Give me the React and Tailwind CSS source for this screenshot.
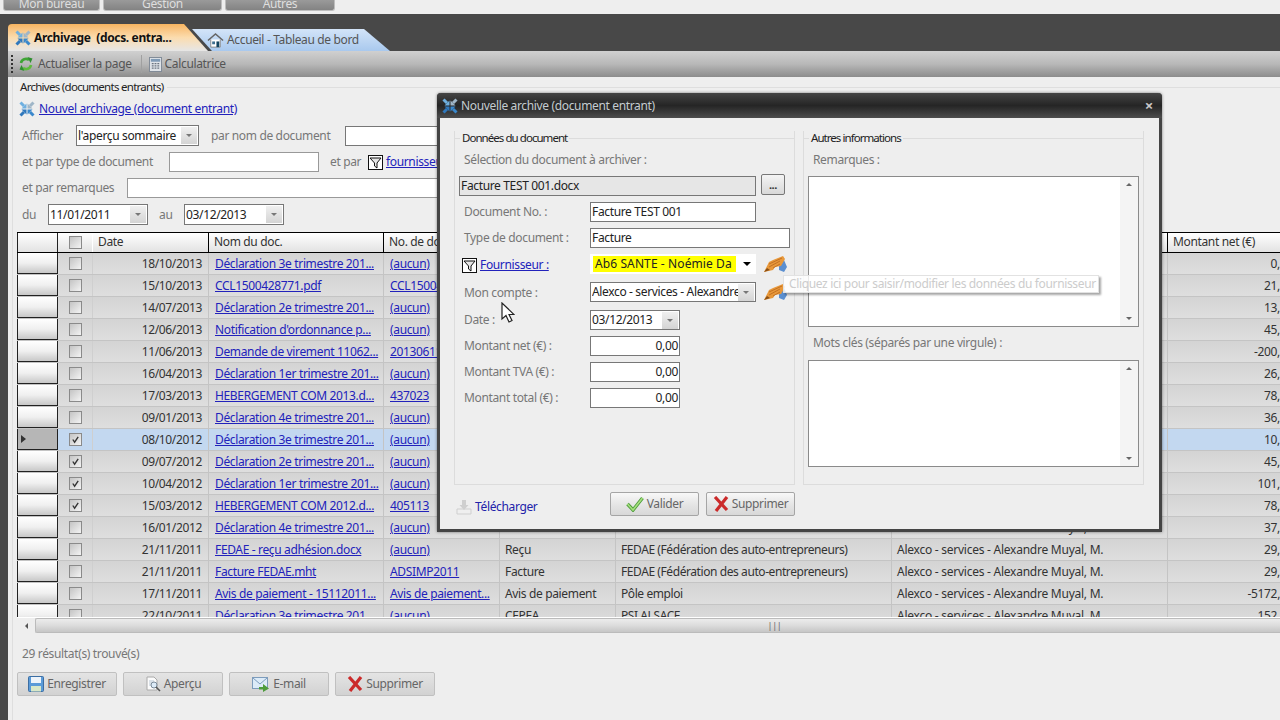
const font = { fontFamily: '"Noto Sans", "Open Sans", sans-serif' }

const rows = [
  { date: '18/10/2013', name: 'Déclaration 3e trimestre 201...', no: '(aucun)', net: '0,' },
  { date: '15/10/2013', name: 'CCL1500428771.pdf', no: 'CCL1500428771', net: '21,' },
  { date: '14/07/2013', name: 'Déclaration 2e trimestre 201...', no: '(aucun)', net: '13,' },
  { date: '12/06/2013', name: "Notification d'ordonnance p...", no: '(aucun)', net: '45,' },
  { date: '11/06/2013', name: 'Demande de virement 11062...', no: '20130611', net: '-200,' },
  { date: '16/04/2013', name: 'Déclaration 1er trimestre 201...', no: '(aucun)', net: '26,' },
  { date: '17/03/2013', name: 'HEBERGEMENT COM 2013.d...', no: '437023', net: '78,' },
  { date: '09/01/2013', name: 'Déclaration 4e trimestre 201...', no: '(aucun)', net: '36,' },
  { date: '08/10/2012', name: 'Déclaration 3e trimestre 201...', no: '(aucun)', net: '10,', checked: true, selected: true },
  { date: '09/07/2012', name: 'Déclaration 2e trimestre 201...', no: '(aucun)', net: '45,', checked: true },
  { date: '10/04/2012', name: 'Déclaration 1er trimestre 201...', no: '(aucun)', net: '101,', checked: true },
  { date: '15/03/2012', name: 'HEBERGEMENT COM 2012.d...', no: '405113', net: '78,', checked: true },
  { date: '16/01/2012', name: 'Déclaration 4e trimestre 201...', no: '(aucun)', net: '37,' },
  { date: '21/11/2011', name: 'FEDAE - reçu adhésion.docx', no: '(aucun)', type: 'Reçu', supplier: 'FEDAE (Fédération des auto-entrepreneurs)', net: '29,' },
  { date: '21/11/2011', name: 'Facture FEDAE.mht', no: 'ADSIMP2011', type: 'Facture', supplier: 'FEDAE (Fédération des auto-entrepreneurs)', net: '29,' },
  { date: '17/11/2011', name: 'Avis de paiement - 15112011...', no: 'Avis de paiement...', type: 'Avis de paiement', supplier: 'Pôle emploi', net: '-5172,' },
  { date: '22/10/2011', name: 'Déclaration 3e trimestre 201', no: '(aucun)', type: 'CEPEA', supplier: 'PSI ALSACE', net: '152,' },
]

const ArchiveIcon = ({ className = 'w-4 h-4' }) => (
  <svg viewBox="0 0 16 16" className={className}>
    <path d="M1.500 1.500L5 5" stroke="#6fb0e0" strokeWidth="3" />
    <path d="M7.500 7.500V2.500L2.500 7.500z" fill="#6fb0e0" />
    <path d="M14.500 1.500L11 5" stroke="#9fb6c8" strokeWidth="3" />
    <path d="M8.500 7.500V2.500L13.500 7.500z" fill="#9fb6c8" />
    <path d="M1.500 14.500L5 11" stroke="#2f78bd" strokeWidth="3" />
    <path d="M7.500 8.500V13.500L2.500 8.500z" fill="#2f78bd" />
    <path d="M14.500 14.500L11 11" stroke="#3a88cc" strokeWidth="3" />
    <path d="M8.500 8.500V13.500L13.500 8.500z" fill="#3a88cc" />
  </svg>
)

const HomeIcon = () => (
  <svg viewBox="0 0 18 18" className="w-[17px] h-[17px]">
    <path d="M4 8v8h10V8" fill="#fff" stroke="#888" />
    <path d="M1 9l8-7 8 7" fill="none" stroke="#666" strokeWidth="1.600" />
    <rect x="10" y="10" width="3" height="6" fill="#15455f" />
    <rect x="5.500" y="10" width="3" height="3" fill="#3f6f8f" />
  </svg>
)

const RefreshIcon = () => (
  <svg viewBox="0 0 16 16" className="w-4 h-4">
    <path d="M3 7a5 5 0 0 1 8-3" fill="none" stroke="#3fa535" strokeWidth="2.600" />
    <path d="M13 9a5 5 0 0 1-8 3" fill="none" stroke="#5dbb3d" strokeWidth="2.600" />
    <path d="M9.500 1l5 1.500-2 4.500zM6.500 15l-5-1.500 2-4.500z" fill="#2f8f30" />
  </svg>
)

const CalcIcon = () => (
  <svg viewBox="0 0 14 16" className="w-[13px] h-[15px]">
    <rect x="0.500" y="0.500" width="13" height="15" fill="#dfe3e8" stroke="#7d8794" />
    <rect x="2" y="2" width="10" height="3" fill="#7f9ab5" />
    <path d="M3 7h2M6 7h2M9 7h2M3 9.500h2M6 9.500h2M9 9.500h2M3 12h2M6 12h2M9 12h2" stroke="#6b7480" strokeWidth="1.400" />
  </svg>
)

const FilterBox = () => (
  <svg viewBox="0 0 15 15" className="w-[15px] h-[15px] shrink-0">
    <rect x="0.500" y="0.500" width="14" height="14" fill="#fff" stroke="#111" />
    <path d="M2 3h11L9 8v5L6.500 11V8z" fill="#e6e6e6" stroke="#111" />
  </svg>
)

const PencilIcon = () => (
  <svg viewBox="0 0 24 18" className="w-6 h-[18px]">
    <path d="M16 10l5-5 3 7-3 5-5-2z" fill="#5b8fd0" />
    <path d="M1 17l5-10 4-2L20 1l2 3-4 7-6 1-2 3z" fill="#e8983a" />
    <path d="M6 9l13-6M6 12l11-6M10 13l7-4" stroke="#bd6c20" strokeWidth="0.900" />
    <path d="M1 17l3-4 3 2z" fill="#8a4f16" />
  </svg>
)

const CheckIcon = () => (
  <svg viewBox="0 0 18 16" className="w-[18px] h-4">
    <path d="M1.500 8l5.500 6L16.500 2" fill="none" stroke="#4e9c3c" strokeWidth="3.400" />
    <path d="M1.500 8l5.500 6L16.500 2" fill="none" stroke="#a6e07e" strokeWidth="1.600" />
  </svg>
)

const CrossIcon = () => (
  <svg viewBox="0 0 16 16" className="w-4 h-4">
    <path d="M2 1l12 13M14 1L3 15" fill="none" stroke="#cb2a2a" strokeWidth="3.200" />
  </svg>
)

const SaveIcon = () => (
  <svg viewBox="0 0 16 16" className="w-4 h-4">
    <rect x="0.500" y="0.500" width="15" height="15" rx="1" fill="#5b9bd8" stroke="#3c6ea3" />
    <rect x="3" y="1" width="10" height="6" fill="#eef4fa" />
    <rect x="3" y="10" width="10" height="5.500" fill="#d9e8c8" />
  </svg>
)

const PreviewIcon = () => (
  <svg viewBox="0 0 16 16" className="w-4 h-4">
    <path d="M2 1h7l3 3v10H2z" fill="#fbfbfb" stroke="#aaa" />
    <path d="M4 5h5M4 7h3M4 9h3" stroke="#b8c6d4" />
    <circle cx="9" cy="9" r="3" fill="#dcebf8" stroke="#7a8a99" />
    <path d="M11 11l4 4" stroke="#555" strokeWidth="1.600" />
  </svg>
)

const MailIcon = () => (
  <svg viewBox="0 0 18 16" className="w-[18px] h-4">
    <rect x="0.500" y="1.500" width="15" height="11" fill="#dcebf8" stroke="#7d9cbc" />
    <path d="M1 2l7 6 7-6" fill="none" stroke="#7d9cbc" />
    <path d="M7 11h4V8l6 4.500-6 3.500v-2.500H7z" fill="#4e9c3c" />
  </svg>
)

const DownloadIcon = () => (
  <svg viewBox="0 0 16 16" className="w-4 h-4">
    <path d="M1 10h14v5H1z" fill="#efefef" stroke="#cfcfcf" />
    <path d="M6 1h4v5h2.500L8 11 3.500 6H6z" fill="#cfcfcf" />
  </svg>
)

const Cursor = () => (
  <svg viewBox="0 0 14 21" className="absolute left-[501px] top-[302px] w-[14px] h-[21px]">
    <path d="M1 1v16l4-3.500 3 6.500 3-1.500-3-6h5z" fill="#fff" stroke="#222" strokeWidth="1.200" />
  </svg>
)

const Arrow = ({ className = 'border-t-[#777]' }) => (
  <span className={`w-0 h-0 border-x-[3px] border-x-transparent border-t-[3px] ${className}`} />
)

const Combo = ({ text, className }) => (
  <div className={`flex items-center bg-white border border-[#777] pl-[1px] pr-[1px] shrink-0 ${className}`}>
    <span className="flex-1 text-[12px] text-[#222] overflow-hidden whitespace-nowrap">{text}</span>
    <span className="w-[16px] h-[17px] bg-gradient-to-b from-[#f0f0f0] to-[#d4d4d4] flex items-center justify-center shrink-0">
      <Arrow />
    </span>
  </div>
)

const Check = ({ checked }) => (
  <span className="w-[13px] h-[13px] border border-[#8a8a8a] bg-gradient-to-br from-[#c4c4c4] to-[#f4f4f4] flex items-center justify-center">
    {checked && (
      <svg viewBox="0 0 10 10" className="w-[9px] h-[9px]">
        <path d="M2 5l2 3 4-6" fill="none" stroke="#333" strokeWidth="1.500" />
      </svg>
    )}
  </span>
)

const BottomBtn = ({ icon, label, className = '' }) => (
  <button className={`w-[100px] h-[24px] flex items-center justify-center gap-[3px] bg-gradient-to-b from-[#e4e4e4] to-[#d2d2d2] border border-[#c0c0c0] rounded-[2px] text-[12px] text-[#666] ${className}`}>
    {icon}
    {label}
  </button>
)

const DialogBtn = ({ icon, label }) => (
  <button className="w-[89px] h-[24px] flex items-center justify-center gap-[3px] bg-gradient-to-b from-[#f8f8f8] via-[#e6e6e6] to-[#d8d8d8] border border-[#a5a5a5] rounded-[2px] text-[12px] text-[#666]">
    {icon}
    {label}
  </button>
)

const GroupTitle = ({ text }) => (
  <div className="flex items-center h-[14px] gap-[2px]">
    <span className="w-[5px] h-px bg-[#dcdcdc]" />
    <span className="text-[11.5px] tracking-[-0.95px] text-[#222] whitespace-nowrap">{text}</span>
    <span className="flex-1 h-px bg-[#dcdcdc]" />
  </div>
)

const Field = ({ label, children, className = 'mt-[6px] h-5' }) => (
  <div className={`flex items-center pl-[9px] ${className}`}>
    <span className="w-[126px] text-[12px] text-[#777] whitespace-nowrap">{label}</span>
    {children}
  </div>
)

const Input = ({ value, className, right }) => (
  <div className={`h-5 bg-white border border-[#777] px-[1px] flex items-center text-[12px] text-[#222] whitespace-nowrap overflow-hidden ${right ? 'justify-end' : ''} ${className}`}>
    {value}
  </div>
)

const TextArea = ({ className }) => (
  <div className={`ml-[4px] w-[331px] bg-white border border-[#8a8a8a] flex justify-end ${className}`}>
    <div className="w-[18px] bg-[#f4f4f4] flex flex-col items-center justify-between py-[6px]">
      <span className="w-0 h-0 border-x-[3px] border-x-transparent border-b-[3px] border-b-[#666]" />
      <Arrow className="border-t-[#666]" />
    </div>
  </div>
)

const Dialog = () => (
  <div className="absolute left-[437px] top-[93px] w-[725px] h-[439px] border-[3px] border-t-0 border-[#444] rounded-t-[4px] bg-[#eeeeee] flex flex-col shadow-[0_0_3px_rgba(0,0,0,0.5)]">
    <div className="h-[25px] -mx-[3px] shrink-0 rounded-t-[4px] bg-gradient-to-b from-[#454545] via-[#252525] to-[#4d4d4d] flex items-center pl-[5px] pr-[9px] gap-[3px]">
      <ArchiveIcon />
      <span className="text-[12px] text-[#c4ccd0] flex-1">Nouvelle archive (document entrant)</span>
      <span className="text-[15px] leading-none font-bold text-[#c8c8c8]">×</span>
    </div>
    <div className="flex pt-[13px] pl-[14px] gap-[8px] h-[367px] shrink-0">
      <div className="w-[341px] border-x border-b border-[#dcdcdc]">
        <GroupTitle text="Données du document" />
        <div className="mt-[7px] h-4 flex items-center pl-[9px] text-[12px] text-[#777]">Sélection du document à archiver :</div>
        <div className="mt-[6px] h-[22px] flex items-center pl-[4px] gap-[5px]">
          <div className="w-[297px] h-5 mt-[2px] bg-[#e6e6e6] border border-[#777] px-[1px] flex items-center text-[12px] text-[#222]">Facture TEST 001.docx</div>
          <button className="w-[24px] h-[21px] mb-[1px] border border-[#777] rounded-[2px] bg-gradient-to-b from-[#f4f4f4] to-[#d8d8d8] text-[11px] leading-none font-bold text-[#333]">...</button>
        </div>
        <Field label="Document No. :"><Input value="Facture TEST 001" className="w-[166px]" /></Field>
        <Field label="Type de document :"><Input value="Facture" className="w-[200px]" /></Field>
        <Field
          className="mt-[6px] h-5"
          label={
            <span className="flex items-center gap-[3px] -ml-[2px] mt-[2px]">
              <FilterBox />
              <span className="text-[#2222bb] underline">Fournisseur :</span>
            </span>
          }
        >
          <div className="w-[166px] h-5 bg-white flex items-center pl-[3px] pr-[5px]">
            <span className="w-[143px] h-4 bg-[#ffff00] pl-[2px] text-[12px] leading-4 text-[#222] tracking-[0.1px] whitespace-nowrap overflow-hidden">Ab6 SANTE - Noémie Da</span>
            <span className="ml-auto w-0 h-0 border-x-[4px] border-x-transparent border-t-[4px] border-t-black" />
          </div>
          <span className="ml-[7px]"><PencilIcon /></span>
        </Field>
        <Field className="mt-[8px] h-5" label={<span className="block mt-[2px]">Mon compte :</span>}>
          <Combo text="Alexco - services - Alexandre Muyal, M." className="w-[166px] h-5" />
          <span className="ml-[7px]"><PencilIcon /></span>
        </Field>
        <Field className="mt-[8px] h-5" label="Date :"><Combo text="03/12/2013" className="w-[90px] h-5" /></Field>
        <Field label="Montant net (€) :"><Input value="0,00" right className="w-[90px]" /></Field>
        <Field label="Montant TVA (€) :"><Input value="0,00" right className="w-[90px]" /></Field>
        <Field label="Montant total (€) :"><Input value="0,00" right className="w-[90px]" /></Field>
      </div>
      <div className="w-[341px] border-x border-b border-[#dcdcdc]">
        <GroupTitle text="Autres informations" />
        <div className="mt-[7px] h-4 flex items-center pl-[9px] text-[12px] text-[#777]">Remarques :</div>
        <TextArea className="mt-[8px] h-[151px]" />
        <div className="mt-[8px] h-4 flex items-center pl-[9px] text-[12px] text-[#777]">Mots clés (séparés par une virgule) :</div>
        <TextArea className="mt-[9px] h-[107px]" />
      </div>
    </div>
    <div className="mt-[7px] ml-[14px] w-[341px] h-[24px] flex items-center gap-[7px]">
      <div className="flex items-center gap-[3px] mt-[6px] ml-[2px] mr-auto">
        <DownloadIcon />
        <span className="text-[12px] text-[#2222aa]">Télécharger</span>
      </div>
      <DialogBtn icon={<CheckIcon />} label="Valider" />
      <DialogBtn icon={<CrossIcon />} label="Supprimer" />
    </div>
  </div>
)

const Table = () => (
  <div className="mt-[7px] h-[385px] overflow-hidden text-[12px]">
    <div className="flex h-[21px] bg-gradient-to-b from-white to-[#e2e2e2] border-y border-black text-[#333]">
      <div className="w-[41px] border-l border-r border-[#222] shrink-0" />
      <div className="w-[35px] border-r border-white shrink-0 flex items-center justify-center"><Check /></div>
      <div className="w-[116px] border-r border-black shrink-0 px-[5px] leading-[18px]">Date</div>
      <div className="w-[175px] border-r border-black shrink-0 px-[5px] leading-[18px]">Nom du doc.</div>
      <div className="w-[116px] shrink-0 px-[5px] leading-[18px]">No. de doc.</div>
      <div className="w-[668px] border-r border-black shrink-0" />
      <div className="flex-1 px-[5px] leading-[18px] whitespace-nowrap">Montant net (€)</div>
    </div>
    {rows.map((r, i) => (
      <div key={i} className="flex h-[22px] border-b border-[#c4c4c4] text-[#333] whitespace-nowrap">
        <div className={`w-[41px] shrink-0 border-x border-b border-x-[#222] border-b-[#222] flex items-center pl-[3px] ${r.selected ? 'bg-[#b6b6b6]' : 'bg-gradient-to-b from-white via-[#f0f0f0] to-[#c8c8c8]'}`}>
          {r.selected && <span className="w-0 h-0 border-y-[4px] border-y-transparent border-l-[5px] border-l-[#333]" />}
        </div>
        <div className={`flex flex-1 min-w-0 ${r.selected ? 'bg-[#c3d8f0]' : 'bg-gradient-to-b from-[#d4d4d4] to-[#dedede]'}`}>
          <div className="w-[35px] shrink-0 flex items-center justify-center border-r border-[#cfcfcf]"><Check checked={r.checked} /></div>
          <div className="w-[116px] shrink-0 border-r border-[#c4c4c4] pr-[6px] text-right leading-[22px]">{r.date}</div>
          <div className="w-[175px] shrink-0 border-r border-[#c4c4c4] pl-[6px] leading-[22px] text-[#2222bb] underline overflow-hidden">{r.name}</div>
          <div className="w-[116px] shrink-0 border-r border-[#c4c4c4] pl-[6px] leading-[22px] text-[#2222bb] underline overflow-hidden">{r.no}</div>
          <div className="w-[116px] shrink-0 border-r border-[#c4c4c4] pl-[5px] leading-[22px]">{r.type}</div>
          <div className="w-[276px] shrink-0 border-r border-[#c4c4c4] pl-[5px] leading-[22px] tracking-[-0.42px]">{r.supplier}</div>
          <div className="w-[276px] shrink-0 border-r border-[#c4c4c4] pl-[5px] leading-[22px] tracking-[-0.25px]">Alexco - services - Alexandre Muyal, M.</div>
          <div className="flex-1 text-right leading-[22px]">{r.net}</div>
        </div>
      </div>
    ))}
  </div>
)

export default function App() {
  return (
    <div className="relative w-[1280px] h-[720px] overflow-hidden bg-[#484848] flex flex-col tracking-[-0.35px]" style={font}>
      {/* menu */}
      <div className="h-[14px] shrink-0 bg-[#eeeeee] flex gap-[3px] pl-[3px] overflow-hidden">
        {[['Mon bureau', 'w-[97px]'], ['Gestion', 'w-[119px]'], ['Autres', 'w-[110px]']].map(([t, w]) => (
          <div key={t} className={`${w} h-[11px] rounded-b-[3px] border-x border-b border-[#bdbdbd] bg-gradient-to-b from-[#9a9a9a] to-[#838383] text-center text-[12px] leading-[7px] text-[#dedede]`}>{t}</div>
        ))}
      </div>

      {/* tabs */}
      <div className="mt-[10px] ml-[8px] h-[27px] shrink-0 flex items-end">
        <div className="relative z-10 w-[200px] h-[27px] pl-[7px] flex items-center gap-[3px] rounded-tl-[4px] bg-gradient-to-b from-[#f7b45f] via-[#fbdcae] to-[#e6e6e6] [clip-path:polygon(0_0,176px_0,100%_100%,0_100%)]">
          <ArchiveIcon />
          <span className="text-[12px] font-bold text-[#111] whitespace-pre">Archivage  (docs. entra...</span>
        </div>
        <div className="w-[198px] h-[22px] -ml-[16px] pl-[15px] flex items-center gap-[3px] bg-gradient-to-b from-[#d3e4f8] to-[#a9c9ee] [clip-path:polygon(0_0,172px_0,100%_100%,20px_100%)]">
          <HomeIcon />
          <span className="text-[12px] text-[#555] whitespace-nowrap">Accueil - Tableau de bord</span>
        </div>
      </div>

      {/* toolbar */}
      <div className="ml-[8px] h-[26px] shrink-0 bg-gradient-to-b from-[#d0d0d0] via-[#b8b8b8] to-[#8c8c8c] flex items-center pl-[3px] text-[12px] text-[#555]">
        <span className="w-[2px] h-[18px] mr-[5px] border-l-2 border-dotted border-[#333]" />
        <RefreshIcon />
        <span className="ml-[4px]">Actualiser la page</span>
        <span className="w-px h-[18px] bg-[#a0a0a0] ml-[9px] mr-[7px]" />
        <CalcIcon />
        <span className="ml-[3px]">Calculatrice</span>
      </div>

      {/* panel */}
      <div className="ml-[8px] flex-1 bg-[#eeeeee] pl-[4px]">
        <div className="h-full border-l border-[#dedede] pl-[4px] text-[12px] text-[#777]">
          <div className="h-5 flex items-center ml-[3px] gap-[4px]">
            <span className="text-[11.5px] text-[#222] tracking-[-0.72px] whitespace-nowrap">Archives (documents entrants)</span>
            <span className="flex-1 h-px bg-[#dedede]" />
          </div>
          <div className="mt-[2px] h-5 flex items-center gap-[4px] ml-[2px]">
            <ArchiveIcon />
            <span className="text-[#2222bb] underline">Nouvel archivage (document entrant)</span>
          </div>
          <div className="mt-[6px] h-[21px] flex items-center pl-[5px]">
            <span className="w-[54px]">Afficher</span>
            <Combo text="l'aperçu sommaire" className="w-[123px] h-[21px]" />
            <span className="ml-[12px] w-[134px]">par nom de document</span>
            <div className="w-[200px] h-5 bg-white border border-[#777]" />
          </div>
          <div className="mt-[6px] h-5 flex items-center pl-[5px]">
            <span className="w-[147px]">et par type de document</span>
            <div className="w-[150px] h-5 bg-white border border-[#999]" />
            <span className="ml-[11px] w-[38px]">et par</span>
            <FilterBox />
            <span className="ml-[3px] text-[#2222bb] underline">fournisseur</span>
          </div>
          <div className="mt-[6px] h-5 flex items-center pl-[5px]">
            <span className="w-[105px]">et par remarques</span>
            <div className="w-[400px] h-5 bg-white border border-[#999]" />
          </div>
          <div className="mt-[6px] h-[21px] flex items-center pl-[5px]">
            <span className="w-[26px]">du</span>
            <Combo text="11/01/2011" className="w-[100px] h-[21px]" />
            <span className="ml-[11px] w-[25px]">au</span>
            <Combo text="03/12/2013" className="w-[100px] h-[21px]" />
          </div>

          <Table />

          {/* horizontal scrollbar, its thumb runs past the window */}
          <div className="h-4 flex items-center border-t border-white overflow-hidden">
            <span className="w-[18px] flex justify-center shrink-0">
              <span className="w-0 h-0 border-y-[3px] border-y-transparent border-r-[3px] border-r-[#555]" />
            </span>
            <div className="w-[1478px] shrink-0 h-[15px] rounded-l-[2px] border border-r-0 border-[#bbb] bg-gradient-to-b from-[#ececec] via-[#dcdcdc] to-[#c6c6c6] flex items-center justify-center">
              <span className="text-[9px] leading-none text-[#666]">|||</span>
            </div>
          </div>

          <div className="mt-[11px] h-5 flex items-center pl-[5px]">29 résultat(s) trouvé(s)</div>
          <div className="mt-[8px] flex gap-[6px]">
            <BottomBtn icon={<SaveIcon />} label="Enregistrer" />
            <BottomBtn icon={<PreviewIcon />} label="Aperçu" />
            <BottomBtn icon={<MailIcon />} label="E-mail" />
            <BottomBtn icon={<CrossIcon />} label="Supprimer" />
          </div>
        </div>
      </div>

      <Dialog />

      {/* tooltip */}
      <div className="absolute left-[783px] top-[275px] w-[316px] h-[18px] bg-white/80 border border-[#e2e2e2] shadow-[2px_2px_2px_rgba(0,0,0,0.35)] pl-[5px] text-[12px] leading-[16px] text-[#cccccc] whitespace-nowrap">
        Cliquez ici pour saisir/modifier les données du fournisseur
      </div>

      <Cursor />
    </div>
  )
}
